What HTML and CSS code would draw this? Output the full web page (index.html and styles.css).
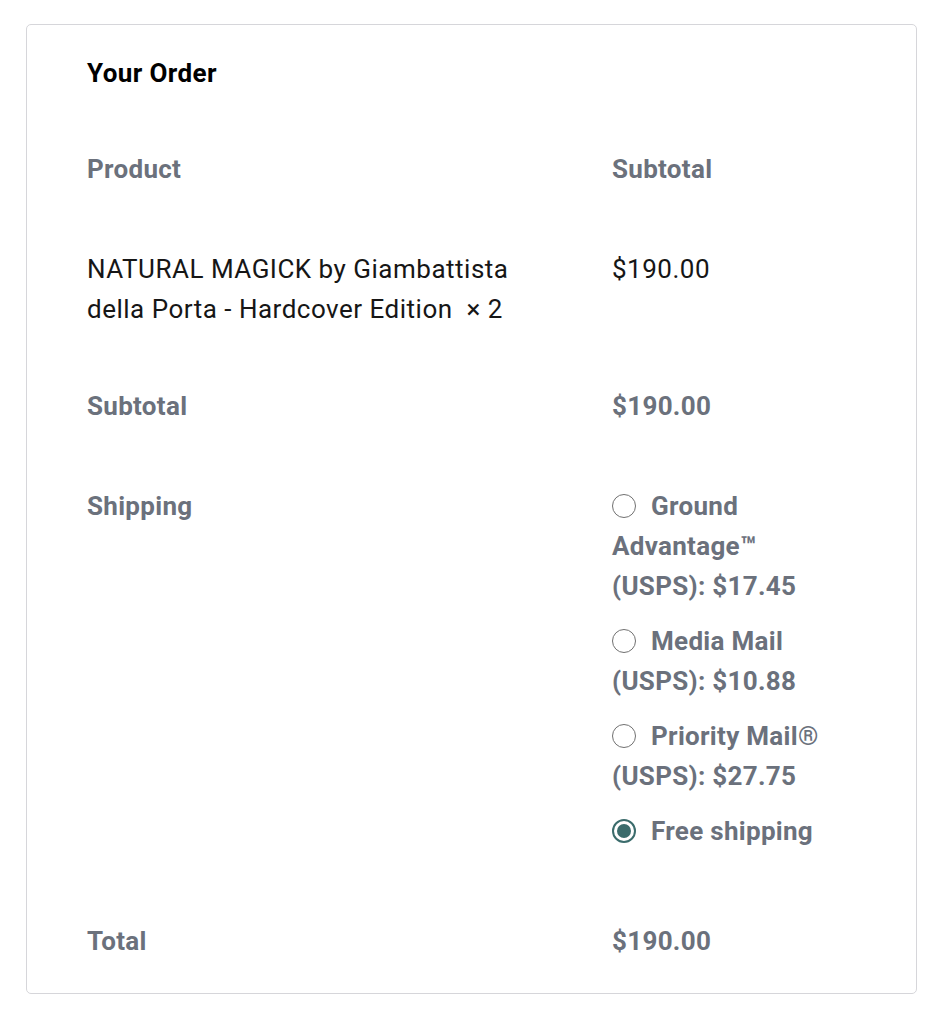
FILE: index.html
```html
<!DOCTYPE html>
<html lang="en">
<head>
<meta charset="utf-8">
<title>Your Order</title>
<link rel="stylesheet" href="styles.css">
</head>
<body>
<div class="card">
  <h3 class="title">Your Order</h3>
  <div class="table">
    <div class="row head">
      <div class="cell">Product</div>
      <div class="cell">Subtotal</div>
    </div>
    <div class="row item">
      <div class="cell">NATURAL MAGICK by Giambattista della Porta - Hardcover Edition&nbsp; ×&nbsp;2</div>
      <div class="cell">$190.00</div>
    </div>
    <div class="row foot">
      <div class="cell">Subtotal</div>
      <div class="cell">$190.00</div>
    </div>
    <div class="row foot">
      <div class="cell">Shipping</div>
      <div class="cell">
        <ul class="methods">
          <li><span class="radio"></span>Ground Advantage™ (USPS): $17.45</li>
          <li><span class="radio"></span>Media Mail (USPS): $10.88</li>
          <li><span class="radio"></span>Priority Mail® (USPS): $27.75</li>
          <li><span class="radio checked"></span>Free shipping</li>
        </ul>
      </div>
    </div>
    <div class="row foot">
      <div class="cell">Total</div>
      <div class="cell">$190.00</div>
    </div>
  </div>
</div>
</body>
</html>
```
FILE: styles.css
```css
* { box-sizing: border-box; }
html, body { margin: 0; padding: 0; background: #fff; }
body {
  font-family: Roboto, "Liberation Sans", Arial, sans-serif;
  color: #111;
  padding: 24px 28px 0 26px;
}
.card {
  width: 891px;
  border: 1.5px solid #d6d6da;
  border-radius: 5px;
  padding: 32px 60px 2px 60px;
}
.title {
  margin: 0;
  font-size: 26px;
  line-height: 33px;
  font-weight: 700;
  color: #000;
  letter-spacing: 0.4px;
}
.table { margin-top: 29px; }
.row {
  display: grid;
  grid-template-columns: 525px 220px;
}
.cell {
  padding: 30px 0;
  font-size: 26px;
  line-height: 40px;
  letter-spacing: 0.3px;
}
.head .cell, .foot .cell {
  color: #6b717c;
  font-weight: 700;
}
.item .cell {
  color: #161616;
  font-weight: 400;
  padding-bottom: 27px;
  letter-spacing: 0.5px;
}
.item .cell:first-child { padding-right: 50px; }
.methods {
  list-style: none;
  margin: 0 0 10px;
  padding: 0;
  display: flex;
  flex-direction: column;
  gap: 15px;
}
.radio {
  display: inline-block;
  width: 24px;
  height: 24px;
  border: 1.5px solid #707070;
  border-radius: 50%;
  margin-right: 15px;
  vertical-align: -3px;
  position: relative;
}
.radio.checked {
  border: 2px solid #3b6c6c;
}
.radio.checked::after {
  content: "";
  position: absolute;
  left: 3px;
  top: 3px;
  width: 14px;
  height: 14px;
  border-radius: 50%;
  background: #3b6c6c;
}
```
